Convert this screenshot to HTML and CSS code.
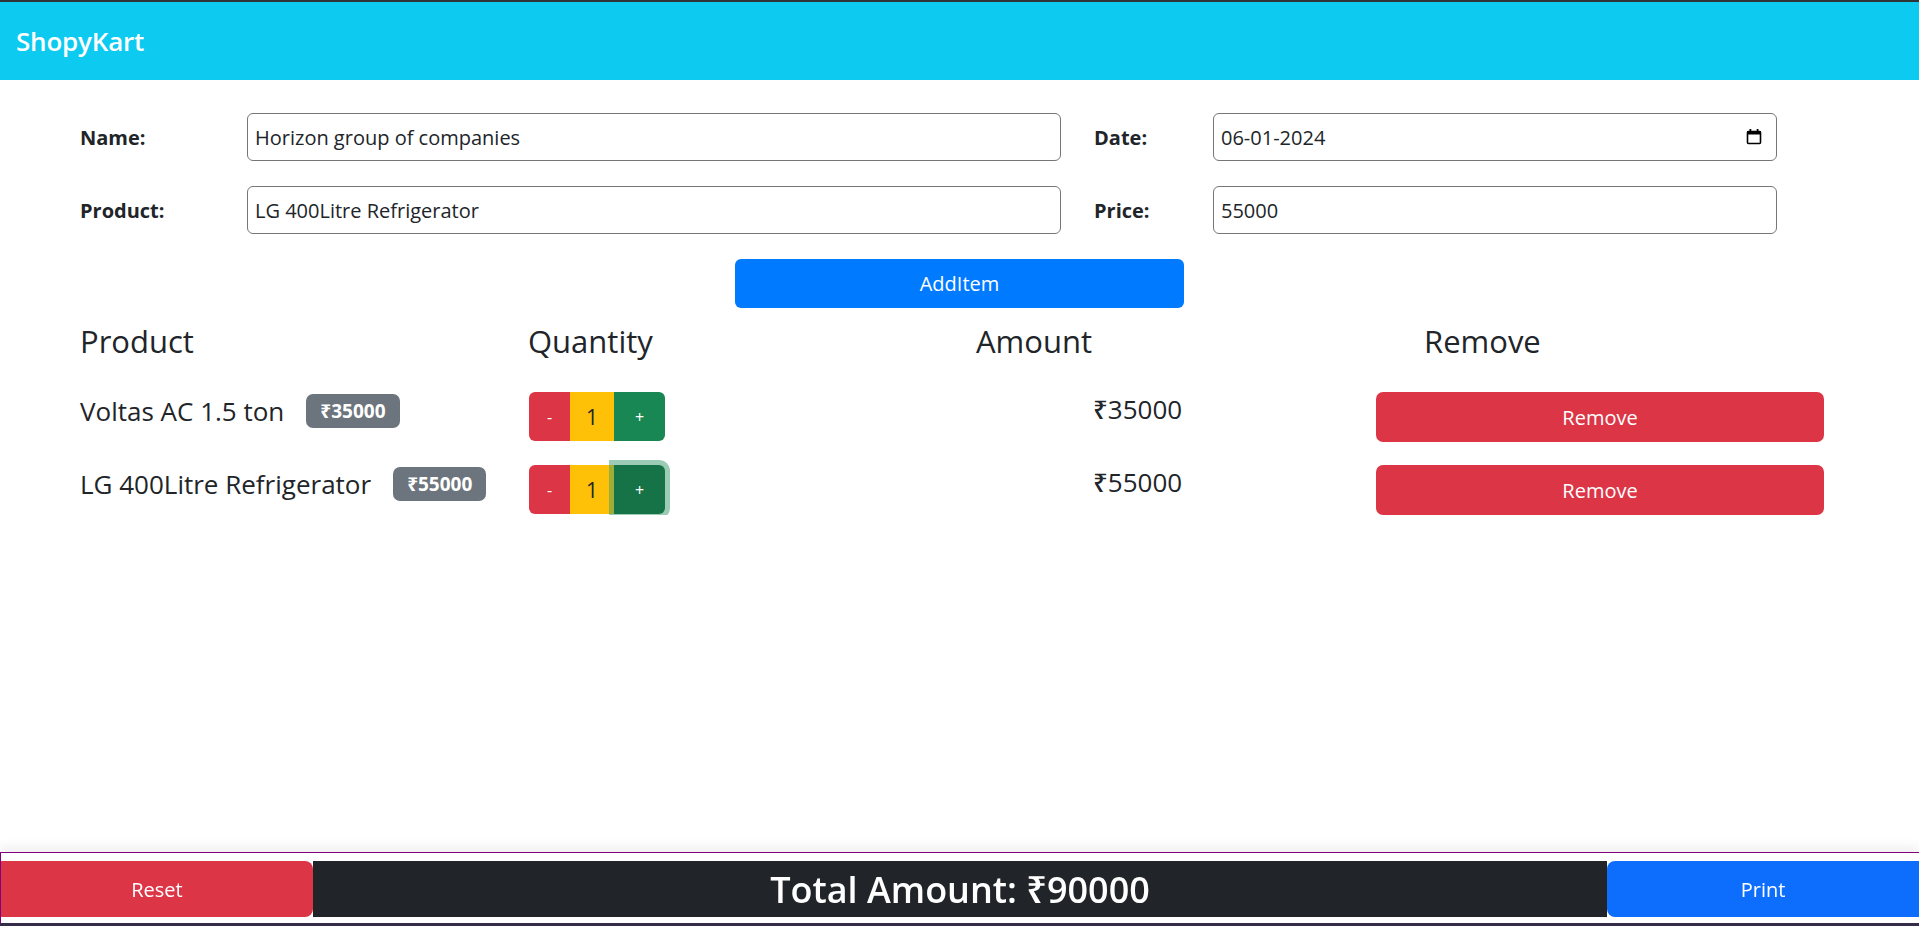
FILE: index.html
```html
<!DOCTYPE html>
<html lang="en">
<head>
<meta charset="utf-8">
<title>ShopyKart</title>
<link rel="stylesheet" href="styles.css">
</head>
<body>
<nav class="navbar"><span class="brand">ShopyKart</span></nav>

<main class="content">
  <div class="form-row">
    <label class="lbl lbl-a">Name:</label>
    <input class="field field-a" type="text" value="Horizon group of companies">
    <label class="lbl lbl-b">Date:</label>
    <div class="date-wrap">
      <input class="field field-b" type="text" value="06-01-2024">
      <svg class="cal" width="16" height="17" viewBox="0 0 16 17"><rect x="1.5" y="3.5" width="13" height="12" rx="1" fill="none" stroke="#000" stroke-width="1.6"/><rect x="1" y="3" width="14" height="3.5" fill="#000"/><rect x="3.5" y="1" width="1.8" height="3" fill="#000"/><rect x="10.7" y="1" width="1.8" height="3" fill="#000"/></svg>
    </div>
  </div>
  <div class="form-row row-gap">
    <label class="lbl lbl-a">Product:</label>
    <input class="field field-a" type="text" value="LG 400Litre Refrigerator">
    <label class="lbl lbl-b">Price:</label>
    <input class="field field-b" type="text" value="55000">
  </div>
  <div class="add-wrap"><button class="btn-add">AddItem</button></div>

  <div class="head-row">
    <h3 class="head">Product</h3>
    <h3 class="head">Quantity</h3>
    <h3 class="head">Amount</h3>
    <h3 class="head">Remove</h3>
  </div>

  <div class="item-row">
    <div class="col-prod"><span class="pname">Voltas AC 1.5 ton</span><span class="badge">₹35000</span></div>
    <div class="col-qty">
      <div class="qgroup">
        <button class="q q-minus">-</button><span class="q q-num">1</span><button class="q q-plus">+</button>
      </div>
    </div>
    <div class="col-amt"><span class="amt">₹35000</span></div>
    <button class="btn-remove">Remove</button>
  </div>

  <div class="item-row row-2">
    <div class="col-prod"><span class="pname">LG 400Litre Refrigerator</span><span class="badge">₹55000</span></div>
    <div class="col-qty">
      <div class="qgroup">
        <button class="q q-minus">-</button><span class="q q-num">1</span><button class="q q-plus q-focus">+</button>
      </div>
    </div>
    <div class="col-amt"><span class="amt">₹55000</span></div>
    <button class="btn-remove">Remove</button>
  </div>
</main>

<footer class="footer">
  <button class="f-reset">Reset</button>
  <div class="f-total">Total Amount: ₹90000</div>
  <button class="f-print">Print</button>
</footer>
<div class="taskbar"></div>
</body>
</html>
```

FILE: styles.css
```css
* { box-sizing: border-box; }
body {
  margin: 0;
  font-family: "Open Sans", "Noto Sans", sans-serif;
  color: #212529;
  background: #fff;
}
button { font-family: inherit; border: 0; cursor: pointer; }

.navbar {
  height: 80px;
  border-top: 2px solid #2f3437;
  background: #0dcaf0;
  display: flex;
  align-items: center;
  padding-left: 16px;
}
.brand {
  color: #fff;
  font-size: 26px;
  font-weight: 600;
  letter-spacing: -0.2px;
}

.content { padding: 33px 0 0 80px; }

.form-row { display: flex; align-items: center; }
.row-gap { margin-top: 25px; }
.lbl { font-size: 20px; font-weight: 700; color: #212529; }
.lbl-a { width: 167px; }
.lbl-b { width: 119px; margin-left: 33px; }
.field {
  height: 48px;
  border: 1px solid #767676;
  border-radius: 6px;
  font-family: inherit;
  font-size: 20px;
  color: #212529;
  padding: 0 7px;
  background: #fff;
}
.field-a { width: 814px; }
.field-b { width: 564px; }
.date-wrap { position: relative; }
.cal { position: absolute; right: 15px; top: 15px; }

.add-wrap { display: flex; justify-content: center; margin-top: 25px; margin-left: -80px; }
.btn-add {
  width: 449px;
  height: 49px;
  background: #007bff;
  color: #fff;
  font-size: 20px;
  border-radius: 6px;
}

.head-row { display: flex; margin-top: 15px; }
.head {
  width: 448px;
  margin: 0;
  font-size: 31px;
  font-weight: 500;
  line-height: 37px;
}

.item-row { display: flex; align-items: flex-start; margin-top: 32px; height: 50px; }
.row-2 { margin-top: 23px; }
.col-prod { width: 449px; display: flex; align-items: center; padding-top: 2px; }
.pname { font-size: 26px; font-weight: 500; line-height: 32px; }
.badge {
  margin-left: 22px;
  background: #6c757d;
  color: #fff;
  font-size: 19px;
  font-weight: 700;
  height: 34px;
  line-height: 34px;
  padding: 0 14px;
  border-radius: 7px;
}
.col-qty { width: 448px; }
.qgroup { display: inline-flex; height: 49px; }
.q {
  height: 49px;
  display: flex;
  align-items: center;
  justify-content: center;
  font-size: 16px;
}
.q-minus { width: 41px; background: #dc3545; color: #fff; border-radius: 6px 0 0 6px; }
.q-num { width: 44px; background: #ffc107; color: #212529; font-size: 21px; }
.q-plus { width: 51px; background: #198754; color: #fff; border-radius: 0 6px 6px 0; }
.q-focus {
  background: #157347;
  box-shadow: 0 0 0 5px rgba(60, 153, 110, 0.5);
  position: relative;
  z-index: 1;
}
.col-amt { width: 399px; padding-left: 116px; padding-top: 1px; }
.amt { font-size: 26px; font-weight: 500; line-height: 32px; }
.btn-remove {
  width: 448px;
  height: 50px;
  background: #dc3545;
  color: #fff;
  font-size: 20px;
  border-radius: 7px;
}

.footer {
  position: fixed;
  left: 0;
  right: 0;
  bottom: 3px;
  height: 71px;
  background: #fff;
  border-top: 1px solid #800080;
  border-left: 1px solid #800080;
  padding: 8px 0 6px;
  display: flex;
  box-shadow: 0 -6px 10px rgba(0, 0, 0, 0.06);
}
.f-reset {
  width: 312px;
  background: #dc3545;
  color: #fff;
  font-size: 20px;
  border-radius: 0 8px 8px 0;
}
.f-total {
  flex: 1;
  background: #212529;
  color: #fff;
  font-size: 36px;
  font-weight: 600;
  display: flex;
  align-items: center;
  justify-content: center;
}
.f-print {
  width: 312px;
  background: #0d6efd;
  color: #fff;
  font-size: 20px;
  border-radius: 8px 0 0 8px;
}
.taskbar {
  position: fixed;
  left: 0;
  right: 0;
  bottom: 0;
  height: 3px;
  background: #352c4a;
}
```
